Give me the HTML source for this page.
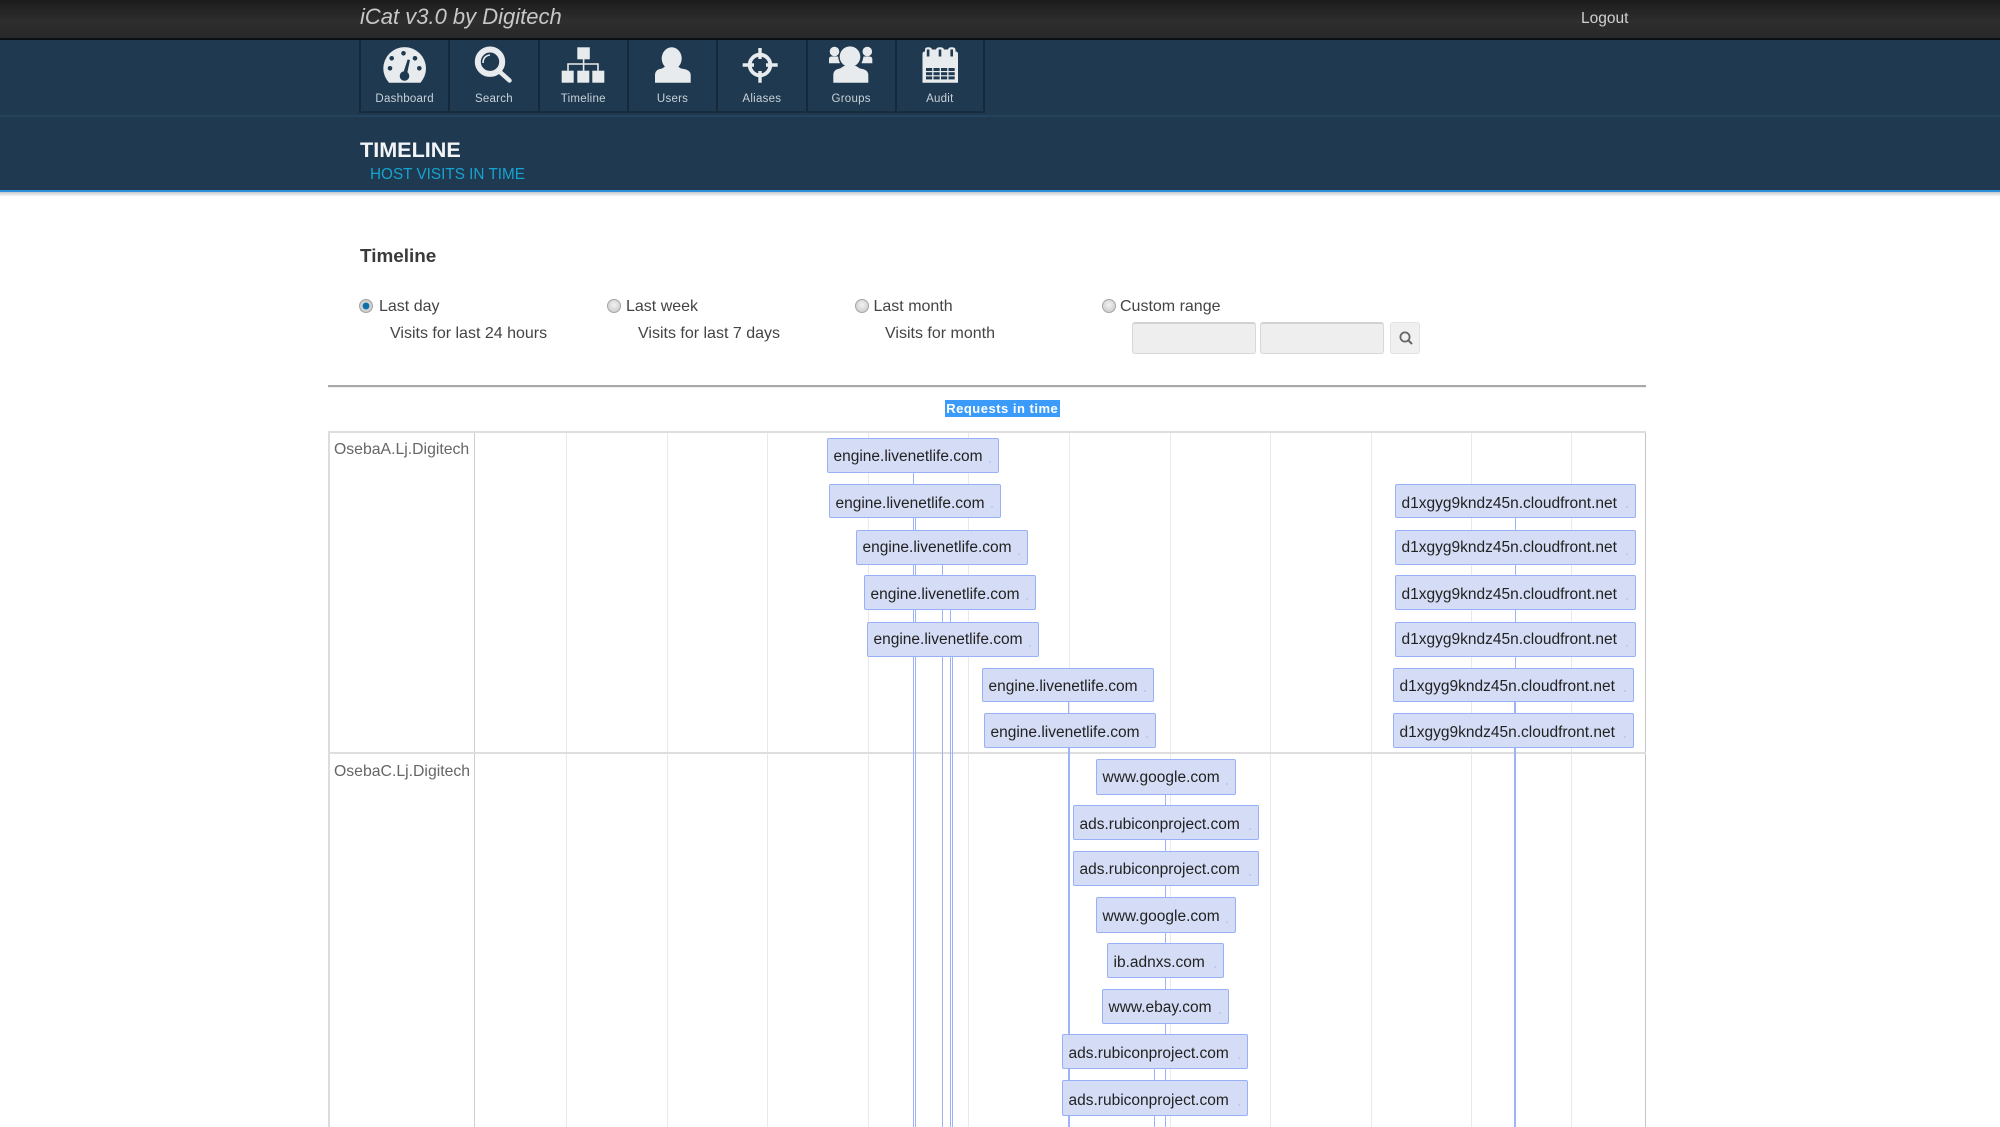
<!DOCTYPE html>
<html>
<head>
<meta charset="utf-8">
<title>iCat v3.0 by Digitech</title>
<style>
html,body{margin:0;padding:0;background:#fff}
body{width:2000px;height:1127px;overflow:hidden;position:relative;font-family:"Liberation Sans",sans-serif}
#p{position:absolute;left:0;top:0;width:2000px;height:1127px;overflow:hidden;filter:blur(.35px)}
.a{position:absolute;white-space:nowrap}
.r{position:absolute;box-sizing:border-box;background:#1f3a50}
.nav{position:absolute;top:40px;width:89.3px;height:73px;box-sizing:border-box;border-left:2px solid #16293a;border-bottom:2px solid #172c3d;color:#c9d1d8;font-size:11.5px;letter-spacing:.25px;text-align:center;line-height:14px;padding-top:52px}
.g{position:absolute;top:432px;height:695px;width:1px;background:#e9e9e9}
.v{position:absolute;width:1px;background:#9db3f8;bottom:0}
.b{position:absolute;box-sizing:border-box;background:#d5ddf6;border:1px solid #97b0f8;border-radius:2px;color:#222;font-size:15.5px;display:flex;align-items:center;padding-left:5.5px;white-space:nowrap}
.b:after{content:"";position:absolute;right:7px;bottom:9px;width:2px;height:2px;background:#bccaf8}
.s1{padding-top:1px}
.s2{padding-top:2.6px}
.s3{padding-top:4px}
.s4{padding-top:5px}
.radio{position:absolute;width:14px;height:14px;border-radius:50%;box-sizing:border-box;border:1px solid #a5a5a5;background:radial-gradient(circle at 50% 40%,#f2f2f2,#c4c4c4)}
.t{font-size:16px;color:#444}
.inp{position:absolute;top:322px;height:32px;box-sizing:border-box;background:#eee;border:1px solid #d8d8d8;border-top:2px solid #d2d2d2;border-radius:3px}
</style>
</head>
<body>
<div id="p">
  <!-- header -->
  <div class="r" style="left:0;top:0;width:2000px;height:39px;background:linear-gradient(#1c1c1c,#2e2e2e 55%,#272727)"></div>
  <div class="r" style="left:0;top:38px;width:2000px;height:2px;background:#0b0f12"></div>
  <div class="r" style="left:0;top:40px;width:2000px;height:150px;background:#1f3a50"></div>
  <div class="r" style="left:0;top:115px;width:2000px;height:2px;background:#25435b"></div>
  <div class="r" style="left:0;top:190px;width:2000px;height:2px;background:#2b90d9"></div>
  <div class="r" style="left:0;top:192px;width:2000px;height:4px;background:linear-gradient(#c2c9cf,#f4f5f6)"></div>

  <div class="a" style="left:360px;top:3px;font-size:22px;line-height:28px;font-style:italic;color:#c8c8c8">iCat v3.0 by Digitech</div>
  <div class="a" style="left:1581px;top:10px;font-size:15.5px;line-height:18px;color:#d0d0d0">Logout</div>

  <div class="nav" style="left:359px">Dashboard</div>
  <div class="nav" style="left:448.3px">Search</div>
  <div class="nav" style="left:537.6px">Timeline</div>
  <div class="nav" style="left:626.9px">Users</div>
  <div class="nav" style="left:716.2px">Aliases</div>
  <div class="nav" style="left:805.5px">Groups</div>
  <div class="nav" style="left:894.8px;border-right:2px solid #16293a;width:90px">Audit</div>

  <svg class="a" style="left:0;top:0" width="1000" height="120" viewBox="0 0 1000 120">
    <!-- dashboard -->
    <path fill="#e8ebee" d="M389 82.7Q383.3 76 383.3 68.5A21.3 21.3 0 0 1 426 68.5Q426 76 420.5 82.7Z"/>
    <g fill="#1f3a50">
      <circle cx="403.5" cy="53.3" r="2.3"/><circle cx="391.7" cy="58.3" r="2.3"/><circle cx="390" cy="68.3" r="2.3"/><circle cx="415" cy="58.3" r="2.3"/><circle cx="419.3" cy="68.3" r="2.3"/>
      <circle cx="404.5" cy="76" r="4.8"/><path d="M407.6 59.5L410 60L406.8 75H402.6Z"/>
    </g>
    <!-- search -->
    <circle cx="490" cy="61.7" r="12.2" fill="none" stroke="#e8ebee" stroke-width="6"/>
    <path d="M500 72L509.5 80.5" stroke="#e8ebee" stroke-width="4.5" stroke-linecap="round"/>
    <path d="M483 63Q483 56 490 55" stroke="#e8ebee" stroke-width="1.6" fill="none"/>
    <!-- timeline -->
    <g fill="#e8ebee">
      <rect x="577.3" y="47.3" width="12.5" height="12"/>
      <rect x="561.7" y="70.7" width="12" height="12"/><rect x="577.3" y="70.7" width="12" height="12"/><rect x="592.3" y="70.7" width="12" height="12"/>
    </g>
    <path d="M583.6 59V70.7M568 70.7V64H598V70.7" fill="none" stroke="#e8ebee" stroke-width="1.6"/>
    <!-- users -->
    <g fill="#e8ebee">
      <ellipse cx="671.7" cy="58.5" rx="10" ry="11.2"/>
      <path d="M655 82.7V75Q655 69.5 662 68.5L666 66H677L681 68.5Q690.7 69.5 690.7 75V82.7Z"/>
    </g>
    <!-- aliases -->
    <circle cx="760" cy="65" r="10.3" fill="none" stroke="#e8ebee" stroke-width="3.8"/>
    <path d="M760 48V59M760 71V82.7M742.7 65H754M766 65H777.7" stroke="#e8ebee" stroke-width="3.4"/>
    <!-- groups -->
    <g fill="#e8ebee">
      <circle cx="850" cy="56.7" r="10.3"/>
      <path d="M833.3 82.7V75Q833.3 69.5 840 68.5L844 66H856L860 68.5Q868.3 69.5 868.3 75V82.7Z"/>
      <ellipse cx="834.5" cy="51.5" rx="4.8" ry="4.8"/>
      <path d="M829 63.3V59Q829 56.5 832 56.5H838Q838.5 60 840 63.3Z"/>
      <ellipse cx="867.3" cy="51.5" rx="4.8" ry="4.8"/>
      <path d="M872.3 63.3V59Q872.3 56.5 869 56.5H863.5Q863 60 861.5 63.3Z"/>
    </g>
    <!-- audit -->
    <path fill="#e8ebee" d="M922.5 82.7V54Q922.5 51.5 925 51.5V49.5Q925 47.3 928.3 47.3Q931.5 47.3 932 49.5H936Q936.5 47.3 940 47.3Q943.5 47.3 944 49.5H948Q948.5 47.3 951.7 47.3Q955 47.3 955.5 49.5V51.5Q958 51.5 958 54V82.7Z"/>
    <g fill="#1f3a50">
      <rect x="926.8" y="49.5" width="2.6" height="7"/><rect x="938.7" y="49.5" width="2.6" height="7"/><rect x="950.4" y="49.5" width="2.6" height="7"/>
      <rect x="926" y="68" width="6.2" height="3"/><rect x="933.5" y="68" width="6.2" height="3"/><rect x="941" y="68" width="6.2" height="3"/><rect x="948.5" y="68" width="6.2" height="3"/>
      <rect x="926" y="72.2" width="6.2" height="3"/><rect x="933.5" y="72.2" width="6.2" height="3"/><rect x="941" y="72.2" width="6.2" height="3"/><rect x="948.5" y="72.2" width="6.2" height="3"/>
      <rect x="926" y="76.4" width="6.2" height="3"/><rect x="933.5" y="76.4" width="6.2" height="3"/><rect x="941" y="76.4" width="6.2" height="3"/><rect x="948.5" y="76.4" width="6.2" height="3"/>
    </g>
  </svg>

  <div class="a" style="left:360px;top:137px;font-size:21.6px;line-height:26px;font-weight:bold;color:#f2f4f6">TIMELINE</div>
  <div class="a" style="left:370px;top:164.5px;font-size:15.3px;line-height:19px;color:#17a3cf">HOST VISITS IN TIME</div>

  <!-- filters -->
  <div class="a" style="left:360px;top:246px;font-size:18.9px;line-height:22px;font-weight:bold;color:#3a3a3a">Timeline</div>

  <div class="radio" style="left:359px;top:299px;background:radial-gradient(circle,#0e6ea8 0,#0e6ea8 3px,#d6d6d6 3.8px,#bdbdbd)"></div>
  <div class="a t" style="left:379px;top:297px;line-height:19px">Last day</div>
  <div class="a t" style="left:390px;top:324px;line-height:19px">Visits for last 24 hours</div>

  <div class="radio" style="left:607px;top:299px"></div>
  <div class="a t" style="left:626px;top:297px;line-height:19px">Last week</div>
  <div class="a t" style="left:638px;top:324px;line-height:19px">Visits for last 7 days</div>

  <div class="radio" style="left:855px;top:299px"></div>
  <div class="a t" style="left:873.5px;top:297px;line-height:19px">Last month</div>
  <div class="a t" style="left:885px;top:324px;line-height:19px">Visits for month</div>

  <div class="radio" style="left:1102px;top:299px"></div>
  <div class="a t" style="left:1120px;top:297px;line-height:19px">Custom range</div>
  <div class="inp" style="left:1131.5px;width:124px"></div>
  <div class="inp" style="left:1260px;width:124px"></div>
  <div class="inp" style="left:1389.5px;width:30px;background:#f0f0f0;border:1px solid #e2e2e2">
    <svg style="position:absolute;left:7px;top:7px" width="16" height="16" viewBox="0 0 16 16"><circle cx="7" cy="7" r="4.6" fill="none" stroke="#666" stroke-width="1.8"/><path d="M10.5 10.5L14 14" stroke="#666" stroke-width="2"/></svg>
  </div>

  <div class="r" style="left:328px;top:385px;width:1318px;height:2px;background:#a8a8a8"></div>
  <div class="r" style="left:328px;top:387px;width:1318px;height:1px;background:#efefef"></div>

  <div class="a" style="left:945px;top:400px;width:114.5px;height:17px;background:#3a9bfb;color:#fff;font-size:13px;line-height:17px;font-weight:bold;text-align:center;letter-spacing:.5px">Requests in time</div>

  <!-- chart frame -->
  <div class="r" style="left:327.5px;top:431px;width:2.5px;height:696px;background:#dcdcdc"></div>
  <div class="r" style="left:1645px;top:431px;width:1px;height:696px;background:#c4c4c4"></div>
  <div class="r" style="left:474px;top:431px;width:1px;height:696px;background:#cfcfcf"></div>

  <div class="g" style="left:566px"></div><div class="g" style="left:666.5px"></div><div class="g" style="left:767px"></div><div class="g" style="left:867.5px"></div><div class="g" style="left:968px"></div><div class="g" style="left:1068.5px"></div><div class="g" style="left:1169.5px"></div><div class="g" style="left:1270px"></div><div class="g" style="left:1370.5px"></div><div class="g" style="left:1470.5px"></div><div class="g" style="left:1571px"></div>

  <div class="r" style="left:328px;top:431px;width:1318px;height:2px;background:#dedede"></div>
  <div class="r" style="left:328px;top:752px;width:1318px;height:2px;background:#dedede"></div>

  <div class="a" style="left:334px;top:439.5px;font-size:15.8px;line-height:19px;color:#666">OsebaA.Lj.Digitech</div>
  <div class="a" style="left:334px;top:762px;font-size:15.8px;line-height:19px;color:#666">OsebaC.Lj.Digitech</div>

  <!-- connector lines -->
  <div class="v" style="left:913px;top:472px"></div>
  <div class="v" style="left:915px;top:518px"></div>
  <div class="v" style="left:942px;top:565px"></div>
  <div class="v" style="left:950px;top:610px"></div>
  <div class="v" style="left:952px;top:657px"></div>
  <div class="v" style="left:1068px;top:702px"></div>
  <div class="v" style="left:1069px;top:748px"></div>
  <div class="v" style="left:1515px;top:518px"></div>
  <div class="v" style="left:1513.5px;top:702px"></div>
  <div class="v" style="left:1165px;top:795px"></div>
  <div class="v" style="left:1154px;top:1069px"></div>

  <!-- items, row A -->
  <div class="b s2" style="left:827px;top:438px;width:172px;height:35px">engine.livenetlife.com</div>
  <div class="b s4" style="left:829px;top:484px;width:172px;height:34px">engine.livenetlife.com</div>
  <div class="b s1" style="left:856px;top:530px;width:172px;height:35px">engine.livenetlife.com</div>
  <div class="b s3" style="left:864px;top:575px;width:172px;height:35px">engine.livenetlife.com</div>
  <div class="b s1" style="left:867px;top:622px;width:172px;height:35px">engine.livenetlife.com</div>
  <div class="b s3" style="left:982px;top:668px;width:172px;height:34px">engine.livenetlife.com</div>
  <div class="b s4" style="left:984px;top:713px;width:172px;height:35px">engine.livenetlife.com</div>

  <div class="b s4" style="left:1395px;top:484px;width:241px;height:34px">d1xgyg9kndz45n.cloudfront.net</div>
  <div class="b s1" style="left:1395px;top:530px;width:241px;height:35px">d1xgyg9kndz45n.cloudfront.net</div>
  <div class="b s3" style="left:1395px;top:575px;width:241px;height:35px">d1xgyg9kndz45n.cloudfront.net</div>
  <div class="b s1" style="left:1395px;top:622px;width:241px;height:35px">d1xgyg9kndz45n.cloudfront.net</div>
  <div class="b s3" style="left:1393px;top:668px;width:241px;height:34px">d1xgyg9kndz45n.cloudfront.net</div>
  <div class="b s4" style="left:1393px;top:713px;width:241px;height:35px">d1xgyg9kndz45n.cloudfront.net</div>

  <!-- items, row C -->
  <div class="b s2" style="left:1096px;top:759px;width:140px;height:36px">www.google.com</div>
  <div class="b s3" style="left:1073px;top:805px;width:186px;height:35px">ads.rubiconproject.com</div>
  <div class="b s2" style="left:1073px;top:851px;width:186px;height:35px">ads.rubiconproject.com</div>
  <div class="b s3" style="left:1096px;top:897px;width:140px;height:36px">www.google.com</div>
  <div class="b s3" style="left:1107px;top:943px;width:117px;height:35px">ib.adnxs.com</div>
  <div class="b s2" style="left:1102px;top:989px;width:127px;height:35px">www.ebay.com</div>
  <div class="b s4" style="left:1062px;top:1034px;width:186px;height:35px">ads.rubiconproject.com</div>
  <div class="b s4" style="left:1062px;top:1080px;width:186px;height:36px">ads.rubiconproject.com</div>
</div>
</body>
</html>
